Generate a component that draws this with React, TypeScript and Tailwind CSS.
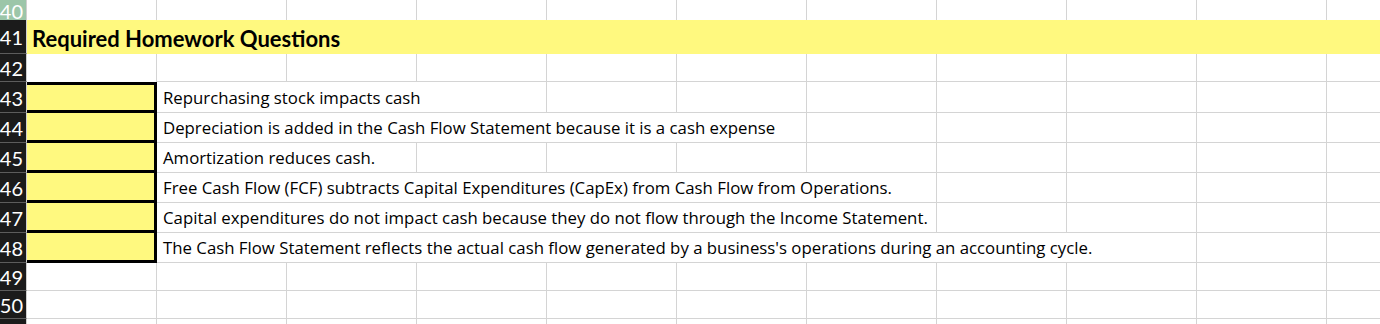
import React from "react";

const FONT = { fontFamily: "Lato, 'Open Sans', sans-serif" };
const BODY = { fontFamily: "'Open Sans', Lato, sans-serif" };

const RestCells = ({ count, noBottom }: { count: number; noBottom?: boolean }) => (
  <>
    {Array.from({ length: count }).map((_, i) => (
      <div
        key={i}
        className={
          noBottom
            ? "w-[130px] shrink-0 border-r border-[#d4d4d4]"
            : "w-[130px] shrink-0 border-r border-b border-[#d4d4d4]"
        }
      />
    ))}
  </>
);

const RowHead = ({ label }: { label: string }) => (
  <div
    className="w-[26px] shrink-0 bg-[#1b1b1b] text-white text-[20px] leading-none flex items-center justify-end overflow-hidden border-b border-[#5c5c5c] border-r border-r-[#cfcfcf]"
    style={{ boxSizing: "content-box" }}
  >
    <span className="pr-[3px] pt-[1px] whitespace-nowrap">{label}</span>
  </div>
);

const questions = [
  { n: "43", text: "Repurchasing stock impacts cash", span: "w-[390px]", rest: 8, first: true },
  { n: "44", text: "Depreciation is added in the Cash Flow Statement because it is a cash expense", span: "w-[650px]", rest: 6 },
  { n: "45", text: "Amortization reduces cash.", span: "w-[260px]", rest: 9 },
  { n: "46", text: "Free Cash Flow (FCF) subtracts Capital Expenditures (CapEx) from Cash Flow from Operations.", span: "w-[780px]", rest: 5 },
  { n: "47", text: "Capital expenditures do not impact cash because they do not flow through the Income Statement.", span: "w-[780px]", rest: 5 },
  { n: "48", text: "The Cash Flow Statement reflects the actual cash flow generated by a business's operations during an accounting cycle.", span: "w-[1040px]", rest: 3 },
];

export default function App() {
  return (
    <div className="w-[1380px] h-[324px] overflow-hidden bg-white text-black" style={FONT}>
      {/* Row 40 */}
      <div className="flex h-[20px]">
        <div
          className="w-[26px] shrink-0 bg-[#9cc6a9] text-white text-[20px] leading-none flex items-end justify-end overflow-hidden border-r border-[#cfcfcf]"
          style={{ boxSizing: "content-box" }}
        >
          <span className="pr-[3px] mb-[-1px]">40</span>
        </div>
        <RestCells count={11} noBottom />
      </div>
      {/* Row 41 */}
      <div className="flex h-[34px]">
        <RowHead label="41" />
        <div className="flex-1 bg-[#fff97f] flex items-center pl-[5px] pt-[3px]">
          <span className="text-[22px] font-bold leading-none">Required Homework Questions</span>
        </div>
      </div>
      {/* Row 42 */}
      <div className="flex h-[28px]">
        <RowHead label="42" />
        <div className="w-[130px] shrink-0 border-r border-[#d4d4d4]" />
        <RestCells count={10} />
      </div>
      {/* Rows 43-48 */}
      {questions.map((q) => (
        <div key={q.n} className={q.first ? "flex h-[31px]" : "flex h-[30px]"}>
          <RowHead label={q.n} />
          <div
            className={
              q.first
                ? "w-[130px] shrink-0 bg-[#fff97f] border-t-[3px] border-b-[3px] border-r-[3px] border-black"
                : "w-[130px] shrink-0 bg-[#fff97f] border-b-[3px] border-r-[3px] border-black"
            }
          />
          <div
            className={`${q.span} shrink-0 border-r border-b border-[#d4d4d4] flex items-center pl-[6px] whitespace-nowrap text-[16.8px] leading-none`}
            style={BODY}
          >
            <span className={q.first ? "pt-[3px]" : "pt-[1px]"}>{q.text}</span>
          </div>
          <RestCells count={q.rest} />
        </div>
      ))}
      {/* Rows 49-51 */}
      {["49", "50", ""].map((n, i) => (
        <div key={i} className="flex h-[28px]">
          <RowHead label={n} />
          <RestCells count={11} />
        </div>
      ))}
    </div>
  );
}
